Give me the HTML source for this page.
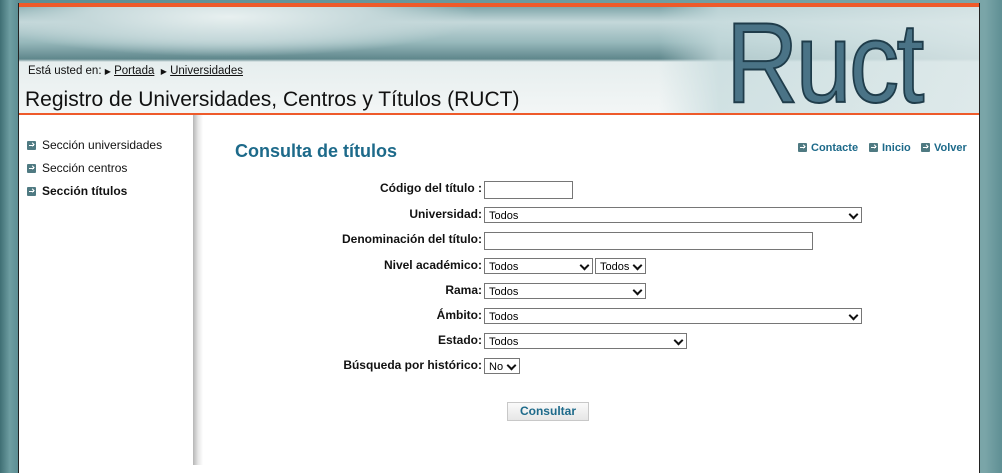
<!DOCTYPE html>
<html><head><meta charset="utf-8"><style>
*{margin:0;padding:0;box-sizing:border-box}
body{width:1002px;height:465px;overflow:hidden;position:relative;font-family:"Liberation Sans",Arial,sans-serif;background:linear-gradient(90deg,#3f6f74 0,#6e9ea2 10px,#5d8e93 18px,#7aa5a8 985px,#5f8f94 1002px)}
.a{position:absolute}
#wrap{left:18px;top:3px;width:962px;height:470px;background:#fff;border-left:1px solid #222;border-right:1px solid #222}
#topline{left:19px;top:3px;width:960px;height:4px;background:#ee5a2a}
#hdr{left:19px;top:7px;width:960px;height:107px;overflow:hidden;background:linear-gradient(180deg,#7fa6aa 0,#c4d8da 15px,#98b9bc 35px,#5f878c 52px,#e6eeee 55px,#f3f6f6 100%)}
#hline{left:19px;top:113px;width:960px;height:2px;background:#ee5a2a}
.lbl{position:absolute;right:520px;font-size:12px;font-weight:bold;color:#111;text-align:right;white-space:nowrap}
.box{position:absolute;border:1px solid #767676;background:#fff;font-size:11px;color:#000;padding-left:4px;padding-top:1px;line-height:14px}
.sel::after{content:"";position:absolute;right:4px;top:3px;width:5px;height:5px;border-right:2px solid #111;border-bottom:2px solid #111;transform:rotate(45deg)}
.ico{display:inline-block;width:9px;height:9px;background:#4f7a82;border-radius:1px;vertical-align:-1px;position:relative}
.ico::after{content:"";position:absolute;left:2px;top:4px;width:5px;height:1px;background:#fff}
.ico::before{content:"";position:absolute;left:4px;top:2px;width:2px;height:2px;border-right:1px solid #fff;border-top:1px solid #fff;transform:rotate(45deg)}
.side{position:absolute;left:27px;font-size:12px;color:#111}
.side .ico{margin-right:6px}
.nav{position:absolute;top:142px;font-size:11px;font-weight:bold;color:#1d6a8a}
.nav .ico{margin-right:4px}
</style></head><body>
<div class="a" id="wrap"></div>
<div class="a" id="topline"></div>
<div class="a" id="hdr">
 <div class="a" style="left:-40px;top:-30px;width:500px;height:80px;border-radius:50%;background:radial-gradient(ellipse,#e8f0f0 0,#c5d8da 40%,rgba(150,185,188,0) 70%)"></div>
 <div class="a" style="left:640px;top:0;width:320px;height:107px;background:linear-gradient(90deg,rgba(190,212,214,0),rgba(200,220,222,.8) 60px,rgba(220,232,233,.9));"></div>
 <div class="a" style="left:707px;top:0;font-size:114px;line-height:114px;color:#4a7386;letter-spacing:-3px;transform:scaleX(0.88);transform-origin:left top;-webkit-text-stroke:2px #1f3c4a">Ruct</div>
 <div class="a" style="left:9px;top:58px;font-size:11.5px;color:#111">Está usted en: <span style="font-size:8px">▶</span> <u>Portada</u> &nbsp;<span style="font-size:8px">▶</span> <u>Universidades</u></div>
 <div class="a" style="left:6px;top:81px;font-size:21px;color:#111">Registro de Universidades, Centros y Títulos (RUCT)</div>
</div>
<div class="a" id="hline"></div>
<div class="a" style="left:193px;top:115px;width:10px;height:350px;background:linear-gradient(90deg,#b5b5b5,#e5e5e5 5px,#fff)"></div>
<div class="side" style="top:138px"><span class="ico"></span>Sección universidades</div>
<div class="side" style="top:161px"><span class="ico"></span>Sección centros</div>
<div class="side" style="top:184px;font-weight:bold"><span class="ico"></span>Sección títulos</div>
<div class="a" style="left:235px;top:141px;font-size:18px;font-weight:bold;color:#1d6a8a">Consulta de títulos</div>
<div class="nav" style="left:798px"><span class="ico"></span>Contacte</div>
<div class="nav" style="left:869px"><span class="ico"></span>Inicio</div>
<div class="nav" style="left:921px"><span class="ico"></span>Volver</div>

<div class="lbl" style="top:181px">Código del título :</div>
<div class="box" style="left:484px;top:181px;width:89px;height:18px"></div>
<div class="lbl" style="top:207px">Universidad:</div>
<div class="box sel" style="left:484px;top:207px;width:378px;height:16px">Todos</div>
<div class="lbl" style="top:232px">Denominación del título:</div>
<div class="box" style="left:484px;top:232px;width:329px;height:18px"></div>
<div class="lbl" style="top:258px">Nivel académico:</div>
<div class="box sel" style="left:484px;top:258px;width:109px;height:16px">Todos</div>
<div class="box sel" style="left:595px;top:258px;width:51px;height:16px">Todos</div>
<div class="lbl" style="top:283px">Rama:</div>
<div class="box sel" style="left:484px;top:283px;width:162px;height:16px">Todos</div>
<div class="lbl" style="top:308px">Ámbito:</div>
<div class="box sel" style="left:484px;top:308px;width:378px;height:16px">Todos</div>
<div class="lbl" style="top:333px">Estado:</div>
<div class="box sel" style="left:484px;top:333px;width:203px;height:16px">Todos</div>
<div class="lbl" style="top:358px">Búsqueda por histórico:</div>
<div class="box sel" style="left:484px;top:358px;width:36px;height:16px">No</div>
<div class="a" style="left:507px;top:402px;width:82px;height:19px;border:1px solid #c8c8c8;background:linear-gradient(#fafafa,#e6e6e6);font-size:12px;font-weight:bold;color:#1d6a8a;text-align:center;line-height:17px">Consultar</div>
</body></html>
